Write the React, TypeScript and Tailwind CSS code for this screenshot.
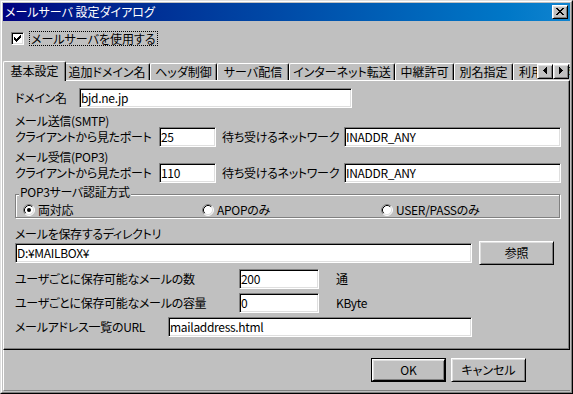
import type { ReactNode } from 'react'

const TABS = [
  { label: '追加ドメイン名', w: 'w-[86px]' },
  { label: 'ヘッダ制御', w: 'w-[67px]' },
  { label: 'サーバ配信', w: 'w-[72px]' },
  { label: 'インターネット転送', w: 'w-[106px]' },
  { label: '中継許可', w: 'w-[59px]' },
  { label: '別名指定', w: 'w-[59px]' },
  { label: '利用者制限', w: 'px-[5px]' },
]

const raised =
  'bg-[#c0c0c0] border border-t-white border-l-white border-b-black border-r-black shadow-[inset_1px_1px_0_#dfdfdf,inset_-1px_-1px_0_#808080]'
const sunken =
  'bg-white border border-t-[#808080] border-l-[#808080] border-b-white border-r-white shadow-[inset_1px_1px_0_#000,inset_-1px_-1px_0_#dfdfdf]'

function Field({ value, className }: { value: string; className: string }) {
  return (
    <div className={`h-[20px] shrink-0 flex items-center pl-[1px] whitespace-nowrap ${sunken} ${className}`}>
      {value}
    </div>
  )
}

function Button({ children, isDefault }: { children: ReactNode; isDefault?: boolean }) {
  if (isDefault) {
    return (
      <div className="w-[75px] h-[24px] border border-black">
        <div className={`h-full flex items-center justify-center ${raised}`}>{children}</div>
      </div>
    )
  }
  return <div className={`w-[75px] h-[24px] flex items-center justify-center ${raised}`}>{children}</div>
}

function Radio({ label, checked, className }: { label: string; checked?: boolean; className: string }) {
  return (
    <div className={`flex items-center gap-[3px] ${className}`}>
      <svg width="12" height="12" viewBox="0 0 12 12" className="shrink-0">
        <circle cx="6" cy="6" r="5" fill="#fff" />
        <path d="M2.11 9.89A5.5 5.5 0 0 1 9.89 2.11" fill="none" stroke="#808080" />
        <path d="M9.89 2.11A5.5 5.5 0 0 1 2.11 9.89" fill="none" stroke="#fff" />
        <path d="M2.82 9.18A4.5 4.5 0 0 1 9.18 2.82" fill="none" stroke="#000" />
        <path d="M9.18 2.82A4.5 4.5 0 0 1 2.82 9.18" fill="none" stroke="#dfdfdf" />
        {checked && <circle cx="6" cy="6" r="2" fill="#000" />}
      </svg>
      <span className="whitespace-nowrap">{label}</span>
    </div>
  )
}

function Arrow({ dir }: { dir: 'left' | 'right' }) {
  return (
    <div className={`w-[16px] h-[15px] flex items-start justify-center pt-[2px] ${raised}`}>
      <svg width="4" height="7" viewBox="0 0 4 7" shapeRendering="crispEdges">
        {dir === 'left' ? (
          <path d="M3 0h1v7H3zM2 1h1v5H2zM1 2h1v3H1zM0 3h1v1H0z" fill="#000" />
        ) : (
          <path d="M0 0h1v7H0zM1 1h1v5H1zM2 2h1v3H2zM3 3h1v1H3z" fill="#000" />
        )}
      </svg>
    </div>
  )
}

export default function App() {
  return (
    <div className="w-[573px] h-[394px] bg-[#c0c0c0] text-black text-[12px] leading-[12px] font-['Noto_Sans_CJK_JP',sans-serif] [font-feature-settings:'palt'] border border-t-[#dfdfdf] border-l-[#dfdfdf] border-b-black border-r-black">
      <div className="h-full flex flex-col p-[1px] border border-t-white border-l-white border-b-[#808080] border-r-[#808080]">
        {/* title bar */}
        <div className="h-[18px] shrink-0 flex items-center justify-between pl-[2px] pr-[2px] bg-linear-to-r from-[#000080] to-[#1084d0]">
          <span className="text-white whitespace-nowrap">メールサーバ 設定ダイアログ</span>
          <div className={`w-[16px] h-[14px] flex items-start justify-center pt-[2px] ${raised}`}>
            <svg width="8" height="7" viewBox="0 0 8 7" shapeRendering="crispEdges">
              <path
                d="M0 0h2v1H0zM6 0h2v1H6zM1 1h2v1H1zM5 1h2v1H5zM2 2h4v1H2zM3 3h2v1H3zM2 4h4v1H2zM1 5h2v1H1zM5 5h2v1H5zM0 6h2v1H0zM6 6h2v1H6z"
                fill="#000"
              />
            </svg>
          </div>
        </div>

        {/* enable checkbox */}
        <div className="h-[40px] shrink-0 pt-[10px] pl-[8px]">
          <div className="flex items-center h-[15px]">
            <div className={`w-[13px] h-[13px] flex items-center justify-center ${sunken}`}>
              <svg width="7" height="7" viewBox="0 0 7 7" shapeRendering="crispEdges">
                <path d="M0 2h1v3H0zM1 3h1v3H1zM2 4h1v3H2zM3 3h1v3H3zM4 2h1v3H4zM5 1h1v3H5zM6 0h1v3H6z" fill="#000" />
              </svg>
            </div>
            <div className="ml-[5px] h-[15px] flex items-center px-[1px] border border-dotted border-black whitespace-nowrap">
              メールサーバを使用する
            </div>
          </div>
        </div>

        {/* tab strip */}
        <div className="relative h-[19px] shrink-0 flex items-end pl-[2px] overflow-x-clip">
          <div className="relative z-10 -mx-[2px] -mb-px h-[20px] w-[63px] shrink-0 flex items-center justify-center pb-[1px] bg-[#c0c0c0] border-t border-l border-r border-t-white border-l-white border-r-black rounded-t-[2px] shadow-[inset_-1px_0_0_#808080]">
            基本設定
          </div>
          {TABS.map((t) => (
            <div
              key={t.label}
              className={`h-[17px] shrink-0 flex items-center justify-center whitespace-nowrap border-t border-l border-r border-t-white border-l-white border-r-black rounded-t-[2px] shadow-[inset_-1px_0_0_#808080] ${t.w}`}
            >
              {t.label}
            </div>
          ))}
          <div className="absolute right-[1px] bottom-[1px] z-20 flex">
            <Arrow dir="left" />
            <Arrow dir="right" />
          </div>
        </div>

        {/* tab panel */}
        <div className="h-[270px] shrink-0 pl-[11px] pt-[7px] tracking-[-0.3px] border border-t-white border-l-white border-b-black border-r-black shadow-[inset_-1px_-1px_0_#808080]">
          <div className="flex items-center h-[20px]">
            <span className="w-[64px] shrink-0 whitespace-nowrap">ドメイン名</span>
            <Field value="bjd.ne.jp" className="w-[273px]" />
          </div>

          <div className="mt-[7px] h-[12px] whitespace-nowrap">メール送信(SMTP)</div>
          <div className="flex items-center h-[20px]">
            <span className="w-[144px] shrink-0 whitespace-nowrap">クライアントから見たポート</span>
            <Field value="25" className="w-[57px]" />
            <span className="ml-[6px] w-[122px] shrink-0 whitespace-nowrap">待ち受けるネットワーク</span>
            <Field value="INADDR_ANY" className="w-[217px]" />
          </div>

          <div className="mt-[4px] h-[12px] whitespace-nowrap">メール受信(POP3)</div>
          <div className="flex items-center h-[20px]">
            <span className="w-[144px] shrink-0 whitespace-nowrap">クライアントから見たポート</span>
            <Field value="110" className="w-[57px]" />
            <span className="ml-[6px] w-[122px] shrink-0 whitespace-nowrap">待ち受けるネットワーク</span>
            <Field value="INADDR_ANY" className="w-[217px]" />
          </div>

          <div className="relative mt-[11px] w-[545px] h-[24px] pt-[7px] pl-[7px] flex border border-[#808080] shadow-[inset_1px_1px_0_#fff,1px_1px_0_#fff]">
            <span className="absolute top-[-9px] left-[3px] px-[1px] bg-[#c0c0c0] whitespace-nowrap">POP3サーバ認証方式</span>
            <Radio label="両対応" checked className="w-[179px]" />
            <Radio label="APOPのみ" className="w-[179px]" />
            <Radio label="USER/PASSのみ" className="w-[150px]" />
          </div>

          <div className="mt-[10px] h-[12px] whitespace-nowrap">メールを保存するディレクトリ</div>
          <div className="mt-[1px] flex items-center h-[24px]">
            <Field value="D:¥MAILBOX¥" className="w-[457px]" />
            <div className="ml-[7px]">
              <Button>参照</Button>
            </div>
          </div>

          <div className="mt-[4px] flex items-center h-[20px]">
            <span className="w-[224px] shrink-0 whitespace-nowrap">ユーザごとに保存可能なメールの数</span>
            <Field value="200" className="w-[80px]" />
            <span className="ml-[17px] whitespace-nowrap">通</span>
          </div>
          <div className="mt-[4px] flex items-center h-[20px]">
            <span className="w-[224px] shrink-0 whitespace-nowrap">ユーザごとに保存可能なメールの容量</span>
            <Field value="0" className="w-[80px]" />
            <span className="ml-[17px] whitespace-nowrap">KByte</span>
          </div>
          <div className="mt-[4px] flex items-center h-[20px]">
            <span className="w-[153px] shrink-0 whitespace-nowrap">メールアドレス一覧のURL</span>
            <Field value="mailaddress.html" className="w-[304px]" />
          </div>
        </div>

        {/* buttons */}
        <div className="h-[41px] shrink-0 flex justify-end items-start gap-[5px] pt-[8px] pr-[44px] border-l border-b border-l-white border-b-[#808080]">
          <Button isDefault>OK</Button>
          <Button>キャンセル</Button>
        </div>
      </div>
    </div>
  )
}
